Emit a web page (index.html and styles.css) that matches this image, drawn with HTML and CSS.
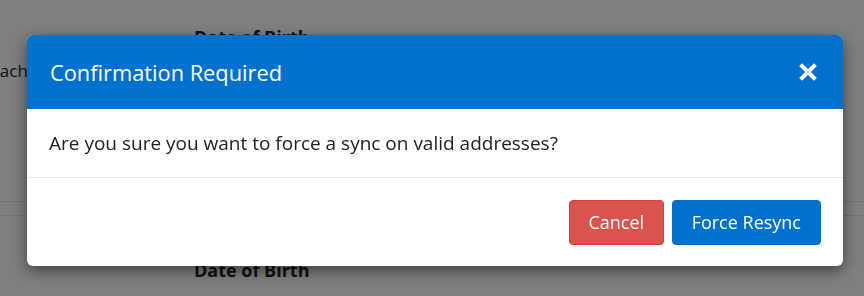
FILE: index.html
```html
<!DOCTYPE html>
<html lang="en">
<head>
    <meta charset="UTF-8">
    <meta name="viewport" content="width=device-width, initial-scale=1.0">
    <title>Addresses</title>
    <link rel="stylesheet" href="styles.css">
</head>
<body>

<div class="page">
    <div class="field-row">
        <span></span>
        <span class="field-label">Date of Birth</span>
    </div>
    <div class="field-row">
        <span class="cut-text">Attach</span>
        <span></span>
    </div>
    <div class="divider"></div>
    <div class="divider second"></div>
    <div class="field-row lower">
        <span></span>
        <span class="field-label">Date of Birth</span>
    </div>
</div>

<div class="overlay">
    <div class="modal">
        <div class="modal-header">
            <h4>Confirmation Required</h4>
            <button class="close-btn" aria-label="Close">
                <svg width="18" height="18" viewBox="0 0 18 18">
                    <path d="M3 3 L15 15 M15 3 L3 15" stroke="#fff" stroke-width="4" stroke-linecap="square"/>
                </svg>
            </button>
        </div>
        <div class="modal-body">
            <p>Are you sure you want to force a sync on valid addresses?</p>
        </div>
        <div class="modal-footer">
            <button class="btn btn-cancel">Cancel</button>
            <button class="btn btn-primary">Force Resync</button>
        </div>
    </div>
</div>

</body>
</html>
```

FILE: styles.css
```css
body {
    margin: 0;
    font-family: "Open Sans", "Noto Sans", sans-serif;
    background-color: #fff;
    color: #222;
}
.page {
    padding-top: 25px;
}
.field-row {
    display: grid;
    grid-template-columns: 194px 1fr;
    height: 24px;
}
.field-row + .field-row {
    margin-top: 10px;
}
.field-label {
    font-weight: bold;
    font-size: 18px;
}
.cut-text {
    font-size: 17px;
    margin-left: -23px;
}
.divider {
    border-top: 1px solid #e4e4e4;
    margin-top: 118px;
}
.divider.second {
    margin-top: 13px;
}
.field-row.lower {
    margin-top: 42px;
}
.overlay {
    position: fixed;
    top: 0;
    left: 0;
    right: 0;
    bottom: 0;
    background-color: rgba(0, 0, 0, 0.5);
}
.modal {
    margin: 35px 0 0 27px;
    width: 816px;
    background-color: #fff;
    border-radius: 6px;
    overflow: hidden;
    box-shadow: 0 5px 15px rgba(0, 0, 0, 0.5);
}
.modal-header {
    background-color: #0071cf;
    color: #fff;
    height: 74px;
    padding: 0 26px 0 23px;
    display: flex;
    align-items: center;
    justify-content: space-between;
}
.modal-header h4 {
    margin: 0;
    font-size: 21.8px;
    font-weight: normal;
}
.close-btn {
    background: none;
    border: none;
    padding: 0;
    cursor: pointer;
    display: flex;
}
.modal-body {
    height: 68px;
    padding: 0 22px;
    display: flex;
    align-items: center;
    border-bottom: 1px solid #e5e5e5;
}
.modal-body p {
    margin: 0;
    font-size: 19px;
    color: #222;
}
.modal-footer {
    height: 88px;
    padding: 0 22px;
    display: flex;
    align-items: center;
    justify-content: flex-end;
    gap: 8px;
}
.btn {
    height: 45px;
    padding: 0 19px;
    font-family: inherit;
    font-size: 18px;
    color: #fff;
    border: 1px solid transparent;
    border-radius: 4px;
    cursor: pointer;
}
.btn-cancel {
    padding: 0 18.5px;
    background-color: #d9534f;
    border-color: #d43f3a;
}
.btn-primary {
    background-color: #0071cf;
    border-color: #006cc6;
}
```
